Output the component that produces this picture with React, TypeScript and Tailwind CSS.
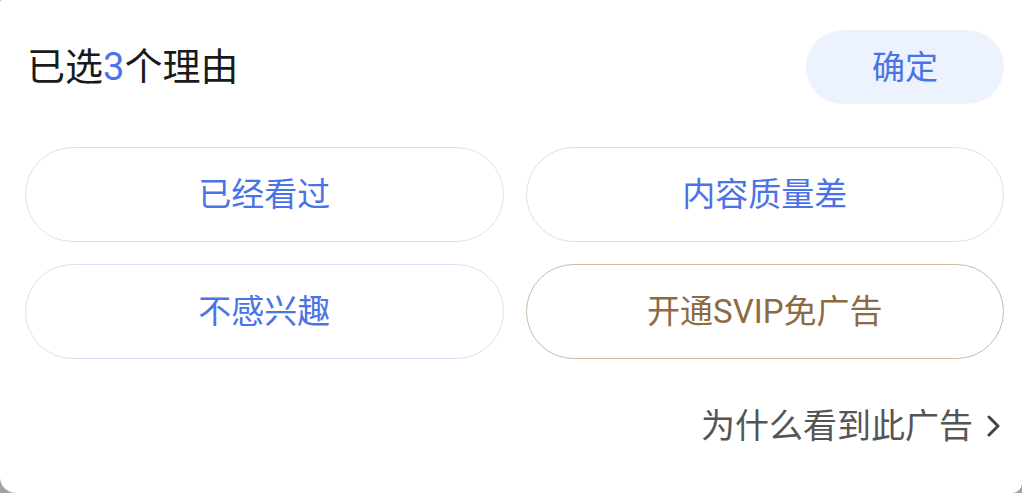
export default function App() {
  const reasons = [
    { label: "已经看过", vip: false },
    { label: "内容质量差", vip: false },
    { label: "不感兴趣", vip: false },
    { label: "开通SVIP免广告", vip: true },
  ];

  return (
    <div
      className="w-[1022px] h-[493px] bg-[#a3a3a3]"
      style={{ fontFamily: 'Roboto, "Noto Sans CJK SC", sans-serif' }}
    >
      <div className="h-full bg-white rounded-bl-[16px] rounded-br-[10px] rounded-tl-[2px] flex flex-col">
        {/* 标题栏 */}
        <div className="mt-[30px] h-[74px] flex items-center justify-between pl-[27px] pr-[18px]">
          <h2 className="text-[38px] leading-none text-[#1a1a1a]">
            已选<span className="text-[#4a73e8]">3</span>个理由
          </h2>
          <button className="w-[198px] h-[74px] rounded-full bg-[#edf3fe] text-[33px] text-[#4a73e8] leading-none">
            确定
          </button>
        </div>

        {/* 理由选项 */}
        <div className="mt-[43px] pl-[25px] pr-[18px] grid grid-cols-2 gap-x-[22px] gap-y-[22px]">
          {reasons.map((r) => (
            <button
              key={r.label}
              className={
                r.vip
                  ? "h-[95px] rounded-full border border-[#cbb9a3] text-[#8d6a43] text-[33px] leading-none"
                  : "h-[95px] rounded-full border border-[#d6e1f6] text-[#4a73e8] text-[33px] leading-none"
              }
            >
              {r.label}
            </button>
          ))}
        </div>

        {/* 底部说明 */}
        <div className="mt-[47px] pr-[22px] flex justify-end items-center gap-[14px]">
          <span className="text-[34px] leading-[40px] text-[#555555]">为什么看到此广告</span>
          <svg width="13" height="22" viewBox="0 0 13 22" fill="none">
            <path d="M2 2 L11 11 L2 20" stroke="#444444" strokeWidth="3" strokeLinecap="round" strokeLinejoin="round" />
          </svg>
        </div>
      </div>
    </div>
  );
}
